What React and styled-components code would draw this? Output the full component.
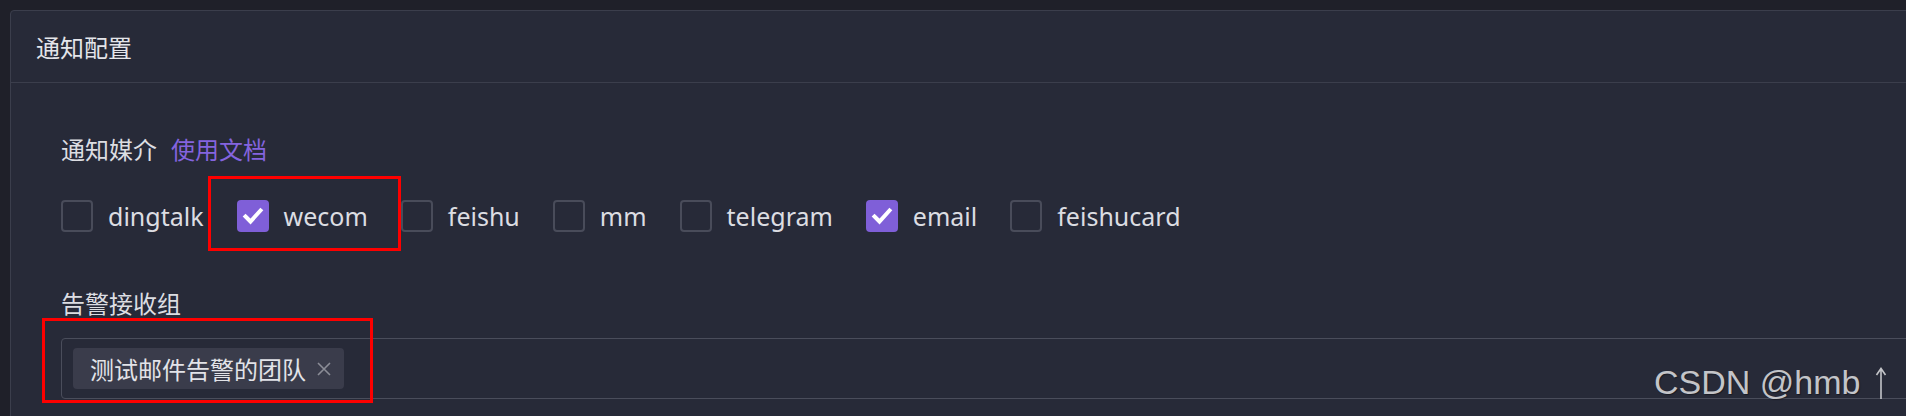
import React from 'react';
import styled, { createGlobalStyle } from 'styled-components';

const GlobalStyle = createGlobalStyle`
  html, body {
    margin: 0;
    padding: 0;
    background: #1f2029;
    font-family: "Noto Sans", "Noto Sans CJK SC", sans-serif;
  }
`;

const channels = [
  { name: 'dingtalk', checked: false },
  { name: 'wecom', checked: true },
  { name: 'feishu', checked: false },
  { name: 'mm', checked: false },
  { name: 'telegram', checked: false },
  { name: 'email', checked: true },
  { name: 'feishucard', checked: false },
];

function Checkbox({ checked, label }) {
  return (
    <CheckItem>
      <Box checked={checked}>
        {checked && (
          <svg width="32" height="32" viewBox="0 0 32 32">
            <polyline points="8.5,16.5 13.5,21.5 23.5,10.5" fill="none" stroke="#fff" strokeWidth="4" strokeLinecap="square" />
          </svg>
        )}
      </Box>
      <CheckText>{label}</CheckText>
    </CheckItem>
  );
}

export default function App() {
  return (
    <Page>
      <GlobalStyle />
      <Card>
        <CardHeader>通知配置</CardHeader>
        <CardBody>
          <FormItem>
            <Label>
              通知媒介
              <DocLink>使用文档</DocLink>
            </Label>
            <CheckRow>
              {channels.map((c) => (
                <Checkbox key={c.name} label={c.name} checked={c.checked} />
              ))}
            </CheckRow>
          </FormItem>
          <FormItem>
            <Label>告警接收组</Label>
            <SelectBox>
              <Tag>
                测试邮件告警的团队
                <TagClose>
                  <svg width="14" height="14" viewBox="0 0 14 14">
                    <path d="M1 1 L13 13 M13 1 L1 13" stroke="#8b8d97" strokeWidth="1.6" />
                  </svg>
                </TagClose>
              </Tag>
            </SelectBox>
          </FormItem>
        </CardBody>
      </Card>
      <Mark top={176} left={208} width={193} height={75} />
      <Mark top={318} left={42} width={331} height={85} />
      <Watermark>
        CSDN @hmb
        <svg width="12" height="32" viewBox="0 0 12 32">
          <path d="M6 1.5 V32 M1.5 8 L6 1.5 L10.5 8" fill="none" stroke="#c3c4c8" strokeWidth="1.6" />
        </svg>
      </Watermark>
    </Page>
  );
}

const Page = styled.div`
  position: relative;
  width: 100vw;
  height: 416px;
  overflow: hidden;
  padding: 10px 0 0 10px;
  box-sizing: border-box;
`;

const Card = styled.div`
  width: calc(100% + 40px);
  min-height: 520px;
  background: #272a38;
  border: 1px solid #3b3e4c;
  border-radius: 4px;
  box-sizing: border-box;
`;

const CardHeader = styled.div`
  height: 71px;
  display: flex;
  align-items: center;
  padding-left: 25px;
  border-bottom: 1px solid #3b3e4c;
  color: #e4e5ea;
  font-size: 24px;
`;

const CardBody = styled.div`
  padding: 51px 0 0 50px;
  display: flex;
  flex-direction: column;
  gap: 56px;
`;

const FormItem = styled.div`
  display: flex;
  flex-direction: column;
`;

const Label = styled.div`
  height: 32px;
  box-sizing: border-box;
  padding-bottom: 4px;
  font-size: 24px;
  color: #dcdde2;
  display: flex;
  align-items: center;
  gap: 14px;
  margin-bottom: 34px;
`;

const DocLink = styled.span`
  color: #8464df;
  cursor: pointer;
`;

const CheckRow = styled.div`
  display: flex;
  align-items: center;
  gap: 33px;
`;

const CheckItem = styled.label`
  display: flex;
  align-items: center;
  gap: 15px;
  height: 32px;
`;

const Box = styled.span`
  width: 32px;
  height: 32px;
  box-sizing: border-box;
  border-radius: 4px;
  border: ${(p) => (p.checked ? 'none' : '2px solid #494c5a')};
  background: ${(p) => (p.checked ? '#7f5fd8' : 'transparent')};
  display: flex;
  align-items: center;
  justify-content: center;
`;

const CheckText = styled.span`
  font-size: 25px;
  color: #dcdde2;
`;

const SelectBox = styled.div`
  margin-top: -16px;
  height: 61px;
  box-sizing: border-box;
  border: 1px solid #4a4d5b;
  border-radius: 4px;
  padding: 10px 11px;
  display: flex;
  align-items: center;
`;

const Tag = styled.span`
  height: 41px;
  display: flex;
  align-items: center;
  gap: 11px;
  padding: 0 13px 0 17px;
  background: #3a3c4b;
  border-radius: 4px;
  font-size: 24px;
  color: #e2e3e8;
`;

const TagClose = styled.span`
  display: flex;
  align-items: center;
`;

const Mark = styled.div`
  position: absolute;
  top: ${(p) => p.top}px;
  left: ${(p) => p.left}px;
  width: ${(p) => p.width}px;
  height: ${(p) => p.height}px;
  border: 3px solid #fe0000;
  box-sizing: border-box;
`;

const Watermark = styled.div`
  position: absolute;
  left: 1654px;
  top: 365px;
  display: flex;
  align-items: flex-end;
  gap: 15px;
  font-family: "Liberation Sans", Arial, sans-serif;
  font-size: 34px;
  line-height: 34px;
  color: #c3c4c8;
  text-shadow: 1px 1px 1px rgba(0, 0, 0, 0.35);
  white-space: nowrap;
`;
